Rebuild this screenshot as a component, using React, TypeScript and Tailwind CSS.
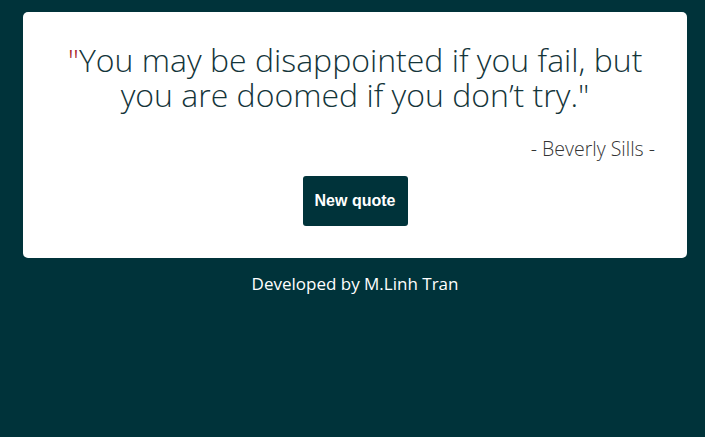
export default function App() {
  return (
    <div className="min-h-screen w-full bg-[#00333a] pt-[12px] pl-[23px]" style={{ fontFamily: '"Open Sans", sans-serif' }}>
      <div className="bg-white rounded-[5px] w-[664px] h-[246px] px-[32px] pt-[30px] flex flex-col">
        <p className="text-center text-[32px] leading-[35px] text-[#14353a] font-light">
          <span className="text-[#a8262b]">"</span>You may be disappointed if you fail, but you are doomed if you don’t try."
        </p>
        <p className="text-right text-[19.5px] text-[#333] font-light mt-[22px]">- Beverly Sills -</p>
        <div className="flex justify-center mt-[13px]">
          <button className="bg-[#00333a] text-white font-bold text-[16px] w-[105px] h-[50px] rounded-[3px]" style={{ fontFamily: '"Liberation Sans", Arial, sans-serif' }}>
            New quote
          </button>
        </div>
      </div>
      <p className="text-center text-white text-[17px] mt-[13px] w-[664px]">Developed by M.Linh Tran</p>
    </div>
  );
}
